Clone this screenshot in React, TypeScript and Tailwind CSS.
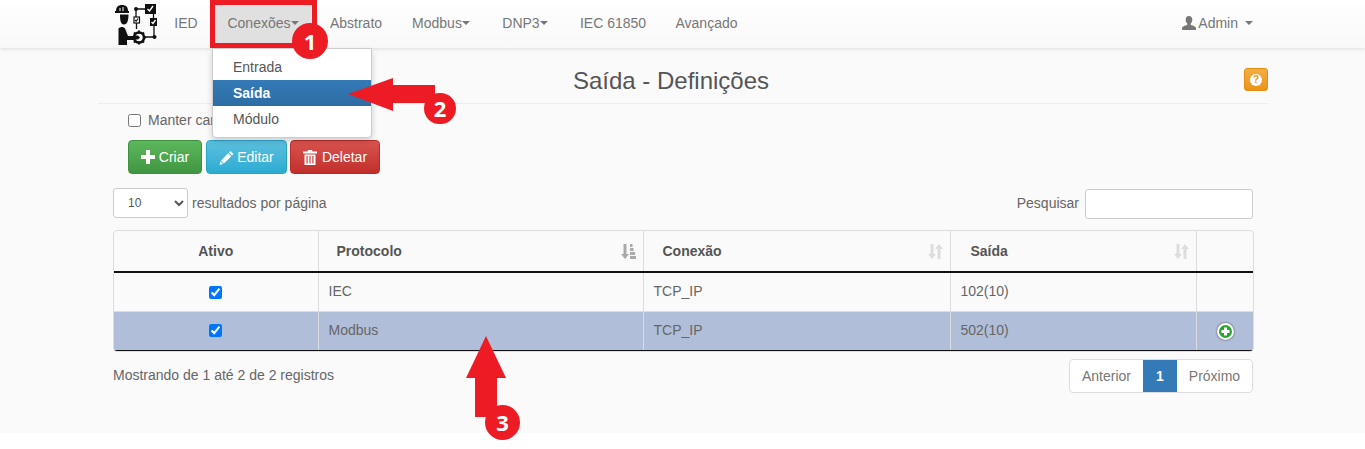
const font = "[font-family:'Liberation_Sans',Arial,sans-serif]";

function Logo() {
  return (
    <svg width="44" height="46" viewBox="0 0 44 46" className="block">
      <g fill="#111" stroke="#111">
        <path d="M1 10c0-4 2-6 6-6s6 2 6 6z" strokeWidth="0" />
        <rect x="0" y="10" width="14" height="2" strokeWidth="0" />
        <path d="M5 7v3M8 6v4" stroke="#fff" strokeWidth="1" fill="none" />
        <path d="M5 13.500h8.500c0 5-1 10-4.500 10S5 19 5 13.500z" strokeWidth="0" />
        <path d="M3.500 27.500c2-2 5-2 6.500 0l3 7.500h7v4h-8v5H3.500z" strokeWidth="0" />
        <circle cx="21" cy="8" r="2" strokeWidth="0" />
        <path d="M21 8h9M21 8v8M21.500 22v6" fill="none" strokeWidth="1.300" />
        <rect x="30" y="3" width="11" height="10" strokeWidth="0" />
        <rect x="19" y="16" width="5.500" height="6" strokeWidth="1.200" fill="#fff" />
        <path d="M38.500 13v4" fill="none" strokeWidth="1.300" />
        <rect x="35" y="17" width="7" height="8" strokeWidth="0" />
        <path d="M39 25v11M29 36h10" fill="none" strokeWidth="1.300" />
        <circle cx="39.500" cy="36" r="2" strokeWidth="0" />
        <circle cx="24" cy="36.500" r="5" fill="#fff" strokeWidth="2.600" />
        <path d="M24 29.500v3M24 40.500v3M17 36.500h3M28 36.500h3M19 31.500l2 2M27 39.500l2 2M29 31.500l-2 2M21 39.500l-2 2" fill="none" strokeWidth="2" />
        <path d="M18 34.500h5l2 2-2 2h-5z" strokeWidth="0" />
      </g>
      <g fill="none" stroke="#fff" strokeWidth="1.400">
        <path d="M32.500 8l2 2 3.500-5" />
        <path d="M36.500 21l1.500 1.500 2.500-3.500" />
      </g>
      <path d="M20 19l1.200 1.200 2-2.700" fill="none" stroke="#111" strokeWidth="1.200" />
    </svg>
  );
}

function Caret({ className = "" }: { className?: string }) {
  return <span className={`inline-block w-0 h-0 border-x-4 border-x-transparent border-t-4 border-t-current align-middle ${className}`} />;
}

function NavItem({ label, caret, active, width, shift }: { label: string; caret?: boolean; active?: boolean; width: string; shift?: string }) {
  return (
    <div className={`h-12 pb-[2px] flex items-center justify-center shrink-0 text-sm text-[#777] ${width} ${active ? "bg-[#e0e0e0] text-[#555]" : ""} ${shift ?? ""}`}>
      {label}
      {caret && <Caret />}
    </div>
  );
}

function Plus() {
  return (
    <svg width="14" height="14" viewBox="0 0 14 14" fill="currentColor"><path d="M5 0h4v5h5v4H9v5H5V9H0V5h5z" /></svg>
  );
}
function Pencil() {
  return (
    <svg width="15" height="15" viewBox="0 0 15 15" fill="currentColor"><path d="M11.500 1l3 3L13 5.500l-3-3zM9.200 3.300l3 3L5 13.500l-3-3zM1.400 11.300l2.800 2.800L.5 15z" /></svg>
  );
}
function Trash() {
  return (
    <svg width="14" height="15" viewBox="0 0 14 15" fill="currentColor"><path d="M5 0h4l.5 1.500H14V3.500H0V1.500h4.500zM1.500 4.500h11V15h-11zM3.500 6v7.500h1.200V6zM6.400 6v7.500h1.200V6zM9.300 6v7.500h1.200V6z" fillRule="evenodd" /></svg>
  );
}
function User() {
  return (
    <svg width="14" height="14" viewBox="0 0 14 14" fill="currentColor"><path d="M7 0c2.200 0 3.300 1.700 3.300 3.800 0 1.600-.7 3-1.500 3.800v1.300c2 .6 5.200 1.300 5.200 3.300V14H0v-1.800c0-2 3.200-2.700 5.200-3.300V7.600C4.400 6.800 3.700 5.400 3.700 3.800 3.700 1.700 4.800 0 7 0z" /></svg>
  );
}
function SortBoth() {
  return (
    <svg width="15" height="15" viewBox="0 0 15 15" fill="#ddd"><path d="M2.500 0h3v10H8L4 15 0 10h2.500zM9.500 15V5H7l4-5 4 5h-2.500v10z" /></svg>
  );
}
function SortActive() {
  return (
    <svg width="15" height="15" viewBox="0 0 15 15" fill="#aaa"><path d="M2.500 0h3v10H8L4 15 0 10h2.500zM9 0h2.500v3H9zM9 4h3.500v3H9zM9 8h5v3H9zM9 12h6v3H9z" /></svg>
  );
}

function Header({ label, center, icon, className = "" }: { label: string; center?: boolean; icon?: React.ReactNode; className?: string }) {
  return (
    <th className={`relative h-[41px] border-r border-[#ddd] border-b-2 border-b-[#111] font-bold text-sm text-[#555] ${center ? "text-center" : "text-left pl-[18px]"} ${className}`}>
      {label}
      {icon && <span className="absolute right-[7px] top-[13px]">{icon}</span>}
    </th>
  );
}

function Row({ name, port, selected }: { name: string; port: string; selected?: boolean }) {
  const cell = `border-r border-[#ddd] ${selected ? "border-b border-b-[#111]" : "border-b border-b-[#ddd]"} pl-[10px] pb-[2px] text-sm text-[#666]`;
  return (
    <tr className={`h-[39px] ${selected ? "bg-[#b0bed9]" : ""}`}>
      <td className={`${cell} !pl-0 text-center`}>
        <input type="checkbox" readOnly checked className="w-[13px] h-[13px] accent-[#0075ff] align-middle" />
      </td>
      <td className={cell}>{name}</td>
      <td className={cell}>TCP_IP</td>
      <td className={cell}>{port}</td>
      <td className={`${cell} !border-r-0 !pl-[2px] !pb-0 text-center`}>
        {selected && (
          <span className="inline-flex w-[17px] h-[17px] rounded-full bg-[#2fa52f] border-2 border-white shadow-[0_0_2px_#333] items-center justify-center align-middle">
            <svg width="9" height="9" viewBox="0 0 9 9" fill="#fff"><path d="M3 0.500h3V3h2.500v3H6v2.500H3V6H.5V3H3z" /></svg>
          </span>
        )}
      </td>
    </tr>
  );
}

function Badge({ n, className }: { n: string; className: string }) {
  return (
    <div className={`absolute rounded-full bg-[#ed1c24] text-white flex items-center justify-center font-bold text-[22px] [font-family:'Open_Sans',sans-serif] ${className}`}>{n}</div>
  );
}

export default function App() {
  return (
    <div className={`relative h-[449px] w-[1365px] overflow-hidden bg-white ${font}`}>
      <div className="h-[433px] bg-[#fafafa]">
        <nav className="h-12 bg-gradient-to-b from-white to-[#f8f8f8] shadow-[0_1px_4px_rgba(0,0,0,0.12)] flex items-center pl-[113px] pr-[97px]">
          <div className="w-[46px] h-12 flex items-center pl-[2px] shrink-0"><Logo /></div>
          <NavItem label="IED" width="w-[54px]" />
          <NavItem label="Conexões" caret active width="w-[102px]" shift="pr-[2px]" />
          <NavItem label="Abstrato" width="w-[82px]" />
          <NavItem label="Modbus" caret width="w-[90px]" shift="pr-[2px]" />
          <NavItem label="DNP3" caret width="w-[78px]" shift="pr-[2px]" />
          <NavItem label="IEC 61850" width="w-[95px]" shift="pl-[1px]" />
          <NavItem label="Avançado" width="w-[93px]" />
          <div className="ml-auto pb-[2px] flex items-center gap-[2px] text-sm text-[#777] pr-[15px]">
            <User />
            <span>Admin</span>
            <Caret className="ml-[5px]" />
          </div>
        </nav>

        <div className="w-[1170px] ml-[98px] relative">
          <div className="h-[56px] border-b border-[#eee] flex items-center justify-center text-2xl text-[#555] pt-[11px] pr-[24px]">
            Saída - Definições
          </div>
          <button className="absolute right-0 top-5 w-6 h-[23px] rounded-[3px] bg-gradient-to-b from-[#f2ae43] to-[#eb9316] border border-[#e38d13] flex items-center justify-center">
            <span className="w-3 h-3 rounded-full bg-white text-[#eb9316] text-[10px] leading-3 font-bold text-center">?</span>
          </button>

          <div className="pl-[30px] pt-[8px] h-[36px] flex items-start gap-[7px] text-sm leading-4 text-[#666]">
            <input type="checkbox" readOnly className="w-[13px] h-[13px] mt-[2px]" />
            <span>Manter campos</span>
          </div>
          <div className="pl-[30px] flex h-[34px] text-sm text-white gap-[4px]">
            <button className="w-[74px] h-[34px] rounded-[4px] border border-[#3e8f3e] bg-gradient-to-b from-[#5cb85c] to-[#419641] flex items-center justify-center gap-[4px]"><Plus />Criar</button>
            <button className="w-[81px] h-[34px] rounded-[4px] border border-[#28a4c9] bg-gradient-to-b from-[#5bc0de] to-[#2aabd2] flex items-center justify-center gap-[3px]"><Pencil />Editar</button>
            <button className="w-[90px] h-[34px] ml-[-1px] rounded-[4px] border border-[#b92c28] bg-gradient-to-b from-[#d9534f] to-[#c12e2a] flex items-center justify-center gap-[5px]"><Trash />Deletar</button>
          </div>

          <div className="pl-[15px] pr-[15px] mt-[14px] h-[30px] flex items-center justify-between text-sm text-[#666]">
            <div className="flex items-center gap-[4px]">
              <select className="w-[75px] h-[30px] border border-[#ccc] rounded-[3px] bg-white text-xs text-[#555] pl-[10px]">
                <option>10</option>
              </select>
              <span>resultados por página</span>
            </div>
            <div className="flex items-center gap-[6px] h-[30px]">
              <span>Pesquisar</span>
              <input readOnly className="w-[168px] h-[30px] self-start mt-[1px] border border-[#ccc] rounded-[3px] bg-white" />
            </div>
          </div>

          <div className="ml-[15px] mt-[12px] w-[1141px] border border-[#ddd] rounded-[4px] overflow-hidden">
            <table className="w-full table-fixed border-collapse">
              <colgroup>
                <col className="w-[204px]" />
                <col className="w-[325px]" />
                <col className="w-[307px]" />
                <col className="w-[246px]" />
                <col />
              </colgroup>
              <thead>
                <tr>
                  <Header label="Ativo" center />
                  <Header label="Protocolo" icon={<SortActive />} />
                  <Header label="Conexão" className="!pl-[19px]" icon={<SortBoth />} />
                  <Header label="Saída" className="!pl-[20px]" icon={<SortBoth />} />
                  <th className="border-b-2 border-b-[#111]" />
                </tr>
              </thead>
              <tbody>
                <Row name="IEC" port="102(10)" />
                <Row name="Modbus" port="502(10)" selected />
              </tbody>
            </table>
          </div>

          <div className="pl-[15px] pr-[15px] mt-[7px] flex justify-between text-sm text-[#666]">
            <span className="mt-[6px]">Mostrando de 1 até 2 de 2 registros</span>
            <div className="flex h-[34px] rounded-[4px] text-[#777] border border-[#ddd] overflow-hidden bg-white">
              <span className="w-[73px] flex items-center justify-center">Anterior</span>
              <span className="w-[34px] -my-px flex items-center justify-center bg-[#337ab7] text-white font-bold">1</span>
              <span className="w-[75px] flex items-center justify-center">Próximo</span>
            </div>
          </div>
        </div>
      </div>

      {/* Dropdown menu */}
      <div className="absolute left-[212px] top-[48px] w-[160px] h-[90px] bg-white border border-[#ccc] rounded-b-[4px] shadow-[0_3px_6px_rgba(0,0,0,0.175)] pt-[5px] text-sm text-[#555]">
        <div className="h-[26px] leading-[26px] pl-[20px]">Entrada</div>
        <div className="h-[26px] leading-[26px] pl-[20px] bg-gradient-to-b from-[#337ab7] to-[#2e6da4] text-white font-bold">Saída</div>
        <div className="h-[26px] leading-[26px] pl-[20px]">Módulo</div>
      </div>

      {/* Annotations */}
      <div className="absolute left-[210px] top-0 w-[107px] h-[48px] border-[5px] border-[#ed1c24]" />
      <Badge n="1" className="left-[292px] top-[23px] w-[36px] h-[36px]" />
      <svg className="absolute left-[345px] top-[75px]" width="95" height="40" viewBox="0 0 95 40">
        <path d="M3 19L48 3v7h42v18H48v8z" fill="#ed1c24" />
      </svg>
      <Badge n="2" className="left-[424px] top-[93px] w-[32px] h-[31px]" />
      <svg className="absolute left-[460px] top-[330px]" width="50" height="90" viewBox="0 0 50 90">
        <path d="M26 6L46 48H37V87H15V48H6z" fill="#ed1c24" />
      </svg>
      <Badge n="3" className="left-[485px] top-[405px] w-[35px] h-[35px]" />
    </div>
  );
}
